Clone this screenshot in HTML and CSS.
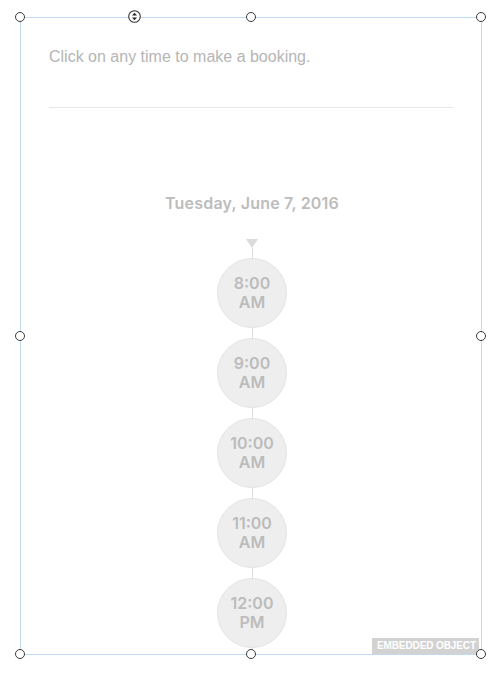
FILE: index.html
```html
<!DOCTYPE html>
<html>
<head>
<meta charset="utf-8">
<link rel="stylesheet" href="styles.css">
</head>
<body>
<div class="frame">
  <div class="content">
    <p class="intro">Click on any time to make a booking.</p>
    <hr class="rule">
    <h2 class="date">Tuesday, June 7, 2016</h2>
    <div class="timeline">
      <div class="arrow"></div>
      <div class="stem"></div>
      <div class="slot">8:00<br>AM</div>
      <div class="stem"></div>
      <div class="slot">9:00<br>AM</div>
      <div class="stem"></div>
      <div class="slot">10:00<br>AM</div>
      <div class="stem"></div>
      <div class="slot">11:00<br>AM</div>
      <div class="stem"></div>
      <div class="slot">12:00<br>PM</div>
      <div class="stem"></div>
    </div>
  </div>
  <div class="badge">EMBEDDED OBJECT</div>
  <span class="handle h-tl"></span>
  <span class="handle h-tm"></span>
  <span class="handle h-tr"></span>
  <span class="handle h-ml"></span>
  <span class="handle h-mr"></span>
  <span class="handle h-bl"></span>
  <span class="handle h-bm"></span>
  <span class="handle h-br"></span>
  <span class="mover">
    <svg width="13" height="13" viewBox="0 0 13 13">
      <circle cx="6.5" cy="6.5" r="5.8" fill="#fff" stroke="#333" stroke-width="1.1"/>
      <path d="M6.5 2.8 L9 5.6 L4 5.6 Z" fill="#222"/>
      <path d="M6.5 10.2 L9 7.4 L4 7.4 Z" fill="#222"/>
    </svg>
  </span>
</div>
</body>
</html>
```
FILE: styles.css
```css
html, body {
  margin: 0;
  padding: 0;
  background: #fff;
}
body {
  width: 501px;
  height: 673px;
  overflow: hidden;
}
.frame {
  position: relative;
  margin: 17px 0 0 20px;
  width: 460px;
  height: 636px;
  border: 1px solid #bfdaf1;
}
.content {
  height: 100%;
  overflow: hidden;
  padding: 0 28px;
}
.intro {
  margin: 0;
  padding-top: 29px;
  font-family: "Liberation Sans", Arial, sans-serif;
  font-size: 16px;
  line-height: 19px;
  color: #b5b5b5;
}
.rule {
  margin: 41px 0 0;
  border: 0;
  border-top: 1px solid #e6e6e6;
  height: 0;
}
.date {
  margin: 86px 0 0 2px;
  text-align: center;
  font-family: Inter, "Noto Sans", sans-serif;
  font-weight: 600;
  font-size: 16px;
  letter-spacing: 0.2px;
  line-height: 19px;
  color: #bcbcbc;
}
.timeline {
  margin: 26px 0 0 2px;
  display: flex;
  flex-direction: column;
  align-items: center;
}
.arrow {
  width: 0;
  height: 0;
  border-left: 6px solid transparent;
  border-right: 6px solid transparent;
  border-top: 9px solid #dcdcdc;
}
.stem {
  width: 1px;
  height: 10px;
  background: #dedede;
}
.slot {
  box-sizing: border-box;
  width: 70px;
  height: 70px;
  border-radius: 50%;
  background: #eeeeee;
  border: 1px solid #e3e3e3;
  display: flex;
  align-items: center;
  justify-content: center;
  text-align: center;
  font-family: Inter, "Noto Sans", sans-serif;
  font-weight: 600;
  font-size: 16px;
  line-height: 19px;
  color: #bcbcbc;
}
.badge {
  position: absolute;
  right: 2px;
  bottom: 0;
  background: #d2d2d2;
  color: #fff;
  font-family: "Liberation Sans", Arial, sans-serif;
  font-weight: 700;
  font-size: 10px;
  letter-spacing: -0.1px;
  line-height: 16px;
  padding: 0 3px 0 5px;
}
.handle {
  position: absolute;
  box-sizing: border-box;
  width: 10px;
  height: 10px;
  border: 1px solid #3a3a3a;
  border-radius: 50%;
  background: #fff;
}
.h-tl { left: -6px; top: -6px; }
.h-tm { left: 225px; top: -6px; }
.h-tr { right: -5px; top: -6px; }
.h-ml { left: -6px; top: 313px; }
.h-mr { right: -5px; top: 313px; }
.h-bl { left: -6px; bottom: -5px; }
.h-bm { left: 225px; bottom: -5px; }
.h-br { right: -5px; bottom: -5px; }
.mover {
  position: absolute;
  left: 107px;
  top: -8px;
  width: 13px;
  height: 13px;
  line-height: 0;
}
```
